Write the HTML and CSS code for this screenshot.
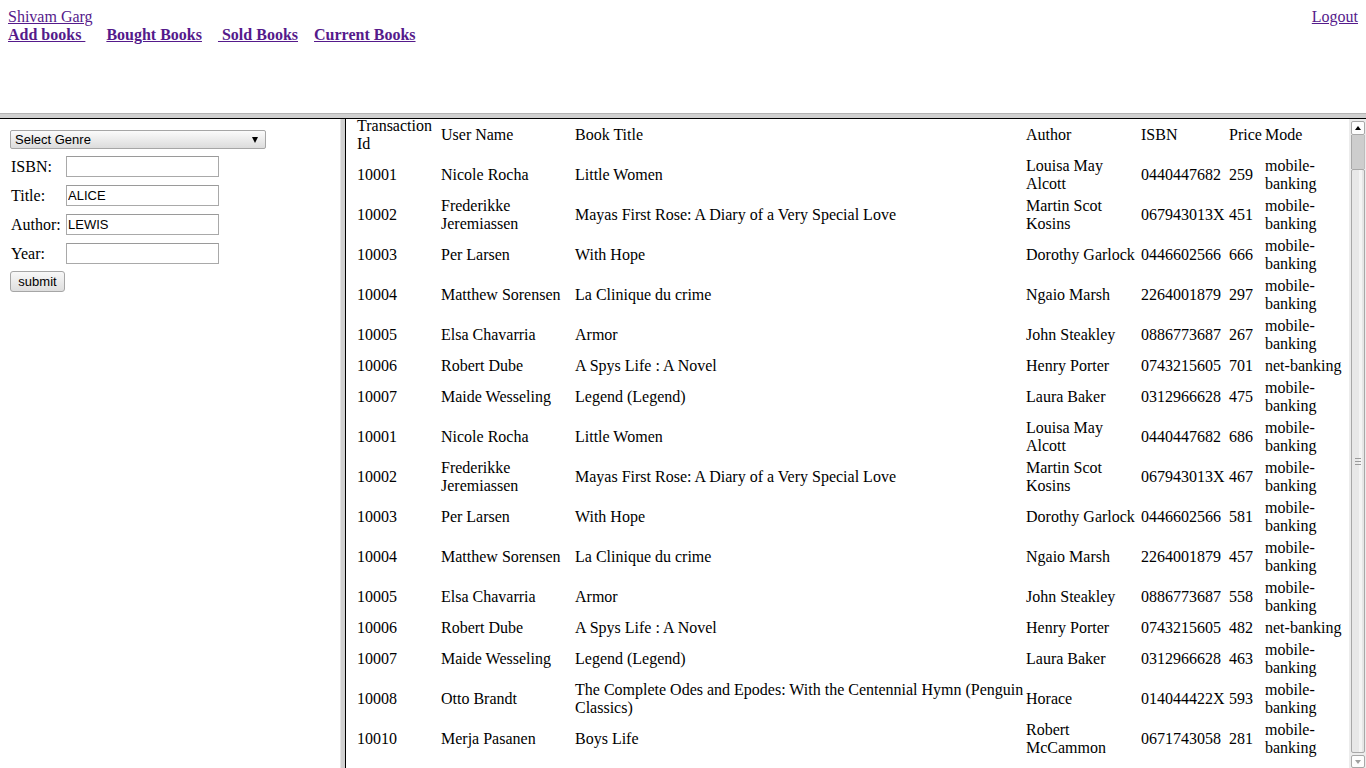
FILE: index.html
```html
<!DOCTYPE html>
<html>
<head>
<meta charset="utf-8">
<title>Books</title>
<link rel="stylesheet" href="styles.css">
</head>
<body>
<div class="top">
  <div class="top-row">
    <a class="link" href="#">Shivam Garg</a>
    <a class="link" href="#">Logout</a>
  </div>
  <div class="nav">
    <a class="link nav-link nav-first" href="#">Add books&nbsp;</a><a class="link nav-link" href="#">Bought Books</a><a class="link nav-link" href="#">&nbsp;Sold Books</a><a class="link nav-link" href="#">Current Books</a>
  </div>
</div>
<div class="hsep"></div>
<div class="main">
  <div class="left">
    <form class="search">
      <div class="genre">
        <select class="genre-select"><option>Select Genre</option></select>
      </div>
      <table class="fields">
        <tr><td class="lbl">ISBN:</td><td class="inp"><input class="field" type="text" value=""></td></tr>
        <tr><td class="lbl">Title:</td><td class="inp"><input class="field" type="text" value="ALICE"></td></tr>
        <tr><td class="lbl">Author:</td><td class="inp"><input class="field" type="text" value="LEWIS"></td></tr>
        <tr><td class="lbl">Year:</td><td class="inp"><input class="field" type="text" value=""></td></tr>
      </table>
      <button class="submit" type="button">submit</button>
    </form>
  </div>
  <div class="vsep"></div>
  <div class="right">
    <div class="content">
      <table class="tx">
        <tr>
          <th class="c1">Transaction Id</th><th class="c2">User Name</th><th class="c3">Book Title</th><th class="c4">Author</th><th class="c5">ISBN</th><th class="c6">Price</th><th class="c7">Mode</th>
        </tr>
        <tr><td>10001</td><td>Nicole Rocha</td><td>Little Women</td><td>Louisa May Alcott</td><td>0440447682</td><td>259</td><td>mobile-banking</td></tr>
        <tr><td>10002</td><td>Frederikke Jeremiassen</td><td>Mayas First Rose: A Diary of a Very Special Love</td><td>Martin Scot Kosins</td><td>067943013X</td><td>451</td><td>mobile-banking</td></tr>
        <tr><td>10003</td><td>Per Larsen</td><td>With Hope</td><td>Dorothy Garlock</td><td>0446602566</td><td>666</td><td>mobile-banking</td></tr>
        <tr><td>10004</td><td>Matthew Sorensen</td><td>La Clinique du crime</td><td>Ngaio Marsh</td><td>2264001879</td><td>297</td><td>mobile-banking</td></tr>
        <tr><td>10005</td><td>Elsa Chavarria</td><td>Armor</td><td>John Steakley</td><td>0886773687</td><td>267</td><td>mobile-banking</td></tr>
        <tr><td>10006</td><td>Robert Dube</td><td>A Spys Life : A Novel</td><td>Henry Porter</td><td>0743215605</td><td>701</td><td>net-banking</td></tr>
        <tr><td>10007</td><td>Maide Wesseling</td><td>Legend (Legend)</td><td>Laura Baker</td><td>0312966628</td><td>475</td><td>mobile-banking</td></tr>
        <tr><td>10001</td><td>Nicole Rocha</td><td>Little Women</td><td>Louisa May Alcott</td><td>0440447682</td><td>686</td><td>mobile-banking</td></tr>
        <tr><td>10002</td><td>Frederikke Jeremiassen</td><td>Mayas First Rose: A Diary of a Very Special Love</td><td>Martin Scot Kosins</td><td>067943013X</td><td>467</td><td>mobile-banking</td></tr>
        <tr><td>10003</td><td>Per Larsen</td><td>With Hope</td><td>Dorothy Garlock</td><td>0446602566</td><td>581</td><td>mobile-banking</td></tr>
        <tr><td>10004</td><td>Matthew Sorensen</td><td>La Clinique du crime</td><td>Ngaio Marsh</td><td>2264001879</td><td>457</td><td>mobile-banking</td></tr>
        <tr><td>10005</td><td>Elsa Chavarria</td><td>Armor</td><td>John Steakley</td><td>0886773687</td><td>558</td><td>mobile-banking</td></tr>
        <tr><td>10006</td><td>Robert Dube</td><td>A Spys Life : A Novel</td><td>Henry Porter</td><td>0743215605</td><td>482</td><td>net-banking</td></tr>
        <tr><td>10007</td><td>Maide Wesseling</td><td>Legend (Legend)</td><td>Laura Baker</td><td>0312966628</td><td>463</td><td>mobile-banking</td></tr>
        <tr><td>10008</td><td>Otto Brandt</td><td class="nowrap">The Complete Odes and Epodes: With the Centennial Hymn (Penguin<br>Classics)</td><td>Horace</td><td>014044422X</td><td>593</td><td>mobile-banking</td></tr>
        <tr><td>10010</td><td>Merja Pasanen</td><td>Boys Life</td><td>Robert McCammon</td><td>0671743058</td><td>281</td><td>mobile-banking</td></tr>
      </table>
    </div>
    <div class="scrollbar">
      <div class="sb-btn sb-up"><span class="tri-up"></span></div>
      <div class="sb-track"></div>
      <div class="sb-thumb"><span class="grip"></span></div>
      <div class="sb-btn sb-down"><span class="tri-down"></span></div>
    </div>
  </div>
</div>
</body>
</html>
```

FILE: styles.css
```css
html, body {
  margin: 0;
  padding: 0;
}
body {
  width: 1366px;
  height: 768px;
  overflow: hidden;
  background: #fff;
  color: #000;
  font-family: "Liberation Serif", "Times New Roman", serif;
  font-size: 16px;
  line-height: 18px;
}
.link {
  color: #551a8b;
  text-decoration: underline;
}
.top {
  height: 113px;
  box-sizing: border-box;
  padding: 8px;
}
.top-row {
  display: flex;
  justify-content: space-between;
  height: 18px;
}
.nav {
  height: 18px;
  font-weight: bold;
  white-space: nowrap;
}
.nav-link {
  margin-right: 16px;
}
.nav-first {
  margin-right: 21px;
}
.hsep {
  height: 4px;
  background: #d0d0d0;
  border-top: 1px solid #b4b4b4;
  border-bottom: 1px solid #000;
}
.main {
  display: flex;
  height: 649px;
}
.left {
  width: 340px;
  box-sizing: border-box;
  padding: 8px;
}
.vsep {
  width: 4px;
  background: #d0d0d0;
  border-left: 1px solid #e4e4e4;
  border-right: 1px solid #000;
}
.search {
  margin: 0;
}
.genre {
  position: relative;
  width: 256px;
  margin: 3px 0 2px 2px;
}
.genre::after {
  content: "";
  position: absolute;
  right: 8px;
  top: 7px;
  border-left: 3px solid transparent;
  border-right: 3px solid transparent;
  border-top: 6px solid #000;
}
.genre-select {
  display: block;
  -webkit-appearance: none;
  appearance: none;
  width: 256px;
  height: 19px;
  margin: 0;
  box-sizing: border-box;
  padding: 0 0 0 4px;
  border: 1px solid #a6a6a6;
  border-radius: 2px;
  background: linear-gradient(#fbfbfb, #dcdcdc);
  font-family: "Liberation Sans", Arial, sans-serif;
  font-size: 13px;
  color: #000;
}
.fields {
  border-spacing: 2px;
  table-layout: fixed;
  width: 216px;
}
.fields td {
  padding: 1px;
  vertical-align: middle;
}
.fields .lbl {
  width: 49px;
  white-space: nowrap;
}
.fields .inp {
  width: 157px;
}
.field {
  display: block;
  width: 153px;
  height: 21px;
  margin: 2px;
  box-sizing: border-box;
  padding: 1px 1px;
  border: 1px solid #a9a9a9;
  border-top-color: #9a9a9a;
  font-family: "Liberation Sans", Arial, sans-serif;
  font-size: 13px;
  color: #000;
}
.submit {
  display: block;
  margin: 2px 0 0 2px;
  width: 55px;
  height: 21px;
  padding: 0;
  border: 1px solid #a6a6a6;
  border-radius: 3px;
  background: linear-gradient(#f8f8f8, #dedede);
  font-family: "Liberation Sans", Arial, sans-serif;
  font-size: 13px;
  color: #000;
}
.right {
  flex: 1;
  display: flex;
  overflow: hidden;
}
.content {
  flex: 1;
  overflow: hidden;
  padding: 0 0 0 8px;
}
.tx {
  border-spacing: 2px;
  margin-top: -5px;
  table-layout: fixed;
  width: 991px;
}
.tx th,
.tx td {
  padding: 1px;
  text-align: left;
  font-weight: normal;
  vertical-align: middle;
}
.tx .nowrap {
  white-space: nowrap;
}
.c1 { width: 80px; }
.c2 { width: 130px; }
.c3 { width: 447px; }
.c4 { width: 111px; }
.c5 { width: 84px; }
.c6 { width: 32px; }
.c7 { width: 77px; }
.scrollbar {
  width: 17px;
  flex: none;
  display: flex;
  flex-direction: column;
  box-sizing: border-box;
  padding: 2px 1px 0 2px;
  background: #ececec;
}
.sb-btn {
  position: relative;
  height: 14px;
  flex: none;
  box-sizing: border-box;
  border: 1px solid #a8a8a8;
  border-radius: 2px;
  background: #fdfdfd;
}
.sb-track {
  height: 34px;
  flex: none;
  box-sizing: border-box;
  background: #cdcdcd;
  border-left: 1px solid #a8a8a8;
  border-right: 1px solid #bdbdbd;
}
.sb-thumb {
  flex: 1;
  position: relative;
  box-sizing: border-box;
  border: 1px solid #a8a8a8;
  border-radius: 2px;
  background: linear-gradient(to right, #e8e8e8 0%, #e8e8e8 55%, #f4f4f4 55%, #f4f4f4 80%, #e6e6e6 80%);
}
.grip {
  position: absolute;
  left: 3px;
  top: 50%;
  width: 6px;
  height: 5px;
  margin-top: -3px;
  border-top: 1px solid #9a9a9a;
  border-bottom: 1px solid #9a9a9a;
}
.grip::after {
  content: "";
  position: absolute;
  left: 0;
  top: 2px;
  width: 6px;
  border-top: 1px solid #9a9a9a;
}
.tri-up {
  position: absolute;
  left: 3px;
  top: 4px;
  border-left: 3px solid transparent;
  border-right: 3px solid transparent;
  border-bottom: 4px solid #000;
}
.sb-down {
  height: 13px;
  margin-top: 2px;
}
.tri-down {
  position: absolute;
  left: 3px;
  top: 4px;
  border-left: 3px solid transparent;
  border-right: 3px solid transparent;
  border-top: 4px solid #a0a0a0;
}
```
